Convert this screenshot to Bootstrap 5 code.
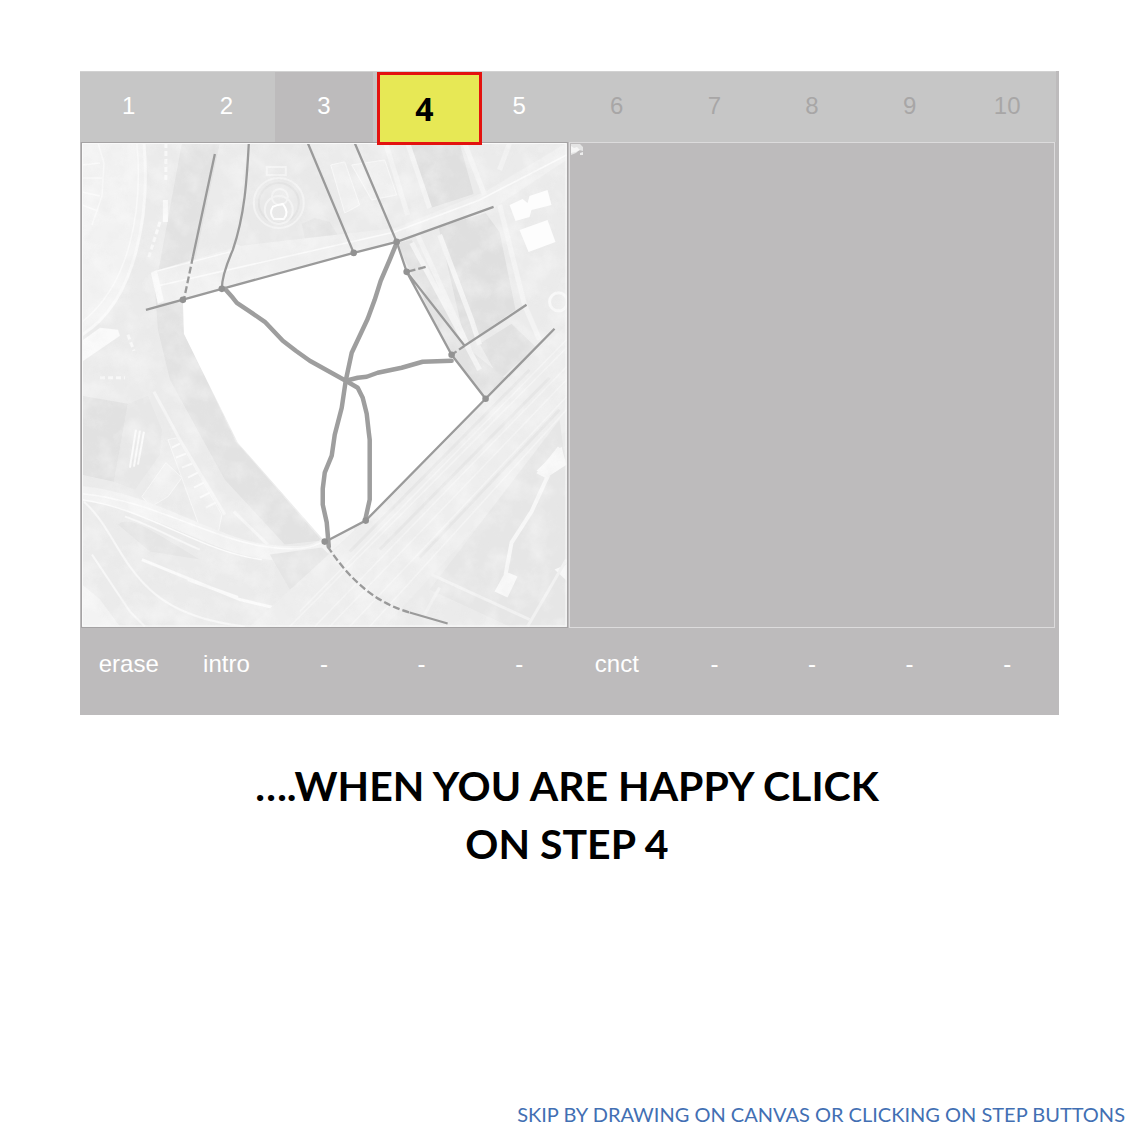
<!DOCTYPE html>
<html lang="en">
<head>
<meta charset="utf-8">
<meta name="viewport" content="width=device-width, initial-scale=1">
<title>Step 4</title>
<link href="https://cdn.jsdelivr.net/npm/bootstrap@5.3.0/dist/css/bootstrap.min.css" rel="stylesheet">
<style>
body { font-family: Lato, Carlito, sans-serif; color: #000; background: #fff; }
.stage { padding: 71px 75px 0 80px; }
.device { background: #bdbbbc; font-family: "Liberation Sans", Arial, sans-serif; padding-right: 3px; }
.ten { display: grid; grid-template-columns: repeat(10, 1fr); }
.ten button { border: 0; padding: 0; background: transparent; color: #fff; font-size: 24px; line-height: 28px; position: relative; }
.steps { border-top: 1px solid #d2d2d2; background: #c6c6c6; }
.steps button { height: 70px; padding-bottom: 2px; }
.steps .current { background: #bdbbbc; }
.steps button:disabled { color: #a8a6a6; }
.steps .pick { position: absolute; left: 4px; top: 0; width: 105px; height: 73px; z-index: 2; background: #e7e855; border: 3px solid #e3120f; color: #000; font: 700 32px/68px "Open Sans", sans-serif; padding-right: 10px; }
.panes { display: grid; grid-template-columns: 1fr 1fr; gap: 1px; padding: 0 1px; }
.pane { border: 1px solid #a5a3a4; overflow: hidden; }
.pane svg { display: block; width: 100%; height: auto; }
.blank { border-color: #dcdbdc; }
.blank svg { width: 12px; margin: 1px; }
.tools { padding: 15px 0 30px; }
.tools button { height: 42px; line-height: 30px; }
.notice { font-size: 41px; font-weight: 700; line-height: 58px; margin: 42px 0 0; text-align: center; }
.skip { color: #426fb3; font-size: 20px; line-height: 24px; padding: 0 9px 8px; text-align: right; text-decoration: none; }
</style>
</head>
<body>
<div class="d-flex flex-column min-vh-100">
<main class="stage">
<div class="device">
<nav class="ten steps" aria-label="Steps">
<button type="button">1</button><button type="button">2</button><button type="button" class="current">3</button><button type="button" aria-label="4"><span class="pick">4</span></button><button type="button">5</button><button type="button" disabled>6</button><button type="button" disabled>7</button><button type="button" disabled>8</button><button type="button" disabled>9</button><button type="button" disabled>10</button>
</nav>
<div class="panes">
<div class="pane">
<svg viewBox="82 143 485 484" role="img" aria-label="Site map with sketched paths">
<defs>
<filter id="grain" x="0" y="0" width="1" height="1"><feTurbulence type="fractalNoise" baseFrequency=".07" numOctaves="4" seed="8"/><feColorMatrix values="0 0 0 0 .8  0 0 0 0 .8  0 0 0 0 .8  2.2 0 0 0 -.95"/></filter>
<filter id="pale" x="0" y="0" width="1" height="1"><feTurbulence type="fractalNoise" baseFrequency=".04" numOctaves="4" seed="21"/><feColorMatrix values="0 0 0 0 1  0 0 0 0 1  0 0 0 0 1  0 2.4 0 0 -1"/></filter>
<filter id="soft"><feGaussianBlur stdDeviation=".7"/></filter>
</defs>
<rect x="82" y="143" width="486" height="485" fill="#ebebeb"/>
<g filter="url(#soft)">
<!-- river and water -->
<path d="M182 143H220L187 300 184 333 236 442 322 541 285 545 225 480 170 380 158 330 155 290Z" fill="#e2e2e2"/>
<path d="M408 143H460L474 194 431 208Z" fill="#dfdfdf"/>
<path d="M439 227L486 213 500 232 516 310 466 345Z" fill="#dfdfdf"/>
<path d="M480 344L512 324 536 347 500 380Z" fill="#e0e0e0"/>
<path d="M397 243L412 240 470 350 505 378 486 399 452 357Z" fill="#e1e1e1"/>
<!-- stadium -->
<path d="M82 143H144C150 210 138 300 82 335Z" fill="#f2f2f2"/>
<path d="M144 143C150 210 138 300 82 335" fill="none" stroke="#f8f8f8" stroke-width="3"/>
<path d="M137 143C143 210 130 285 82 322M82 165L100 163M82 178L102 178M82 192L100 196M82 205L98 211M98 143L104 163 102 196 92 225" fill="none" stroke="#f9f9f9" stroke-width="1.5"/>
<path d="M82 341L100 328 118 330 120 336 82 362Z" fill="#fafafa"/>
<!-- sports field -->
<path d="M82 396L128 404 114 482 82 475Z" fill="#e1e1e1"/>
<path d="M128 404L148 396 162 430 160 455 135 490 114 482Z" fill="#e7e7e7"/>
<path d="M136 430l-6 38M140 431l-6 36M144 432l-6 33" stroke="#fafafa" stroke-width="2"/>
<!-- housing rows beside the river -->
<path d="M142 497L166 463 182 478 168 497 151 507ZM168 440L178 438 222 515 218 535 200 528Z" fill="#efefef" stroke="#f7f7f7"/>
<path d="M172 448l8-4M176 458l10-4M182 468l10-4M188 478l10-5M194 488l10-5M200 498l10-5M206 508l10-5" stroke="#fafafa" stroke-width="2"/>
<path d="M154 392L180 440 225 515M234 512L268 545" fill="none" stroke="#f5f5f5" stroke-width="3"/>
<!-- curved road -->
<path d="M82 494C150 500 210 545 265 552S325 548 350 525" fill="none" stroke="#f3f3f3" stroke-width="15"/>
<path d="M82 494C150 500 210 539 265 547S325 541 350 520M82 500C150 510 200 552 262 560" fill="none" stroke="#fbfbfb" stroke-width="1.5"/>
<path d="M84 502C110 525 118 560 150 590S230 625 245 627M92 555L130 612 145 627M125 517C150 525 175 540 200 550" fill="none" stroke="#f7f7f7" stroke-width="2"/>
<path d="M142 560L240 600 290 612M188 580L238 598" fill="none" stroke="#fafafa" stroke-width="3"/>
<path d="M82 585L100 600 120 627H82Z" fill="#f3f3f3"/>
<path d="M118 525C130 515 150 530 200 560L150 552ZM270 555L322 548 335 560 290 590Z" fill="#e5e5e5"/>
<!-- railway lands -->
<path d="M567 325L567 430 385 627H250L366 521 486 400Z" fill="#eeeeee"/>
<g fill="none" stroke="#f4f4f4" stroke-width="1.5"><path d="M567 340L300 612M567 348L290 627M567 367L315 627M567 380L330 627M567 397L350 627M567 410L370 627"/></g>
<g fill="none" stroke="#e6e6e6" stroke-width="3"><path d="M530 370L350 552M550 378L380 550M560 410L420 558"/></g>
<path d="M560 420L567 470 567 627H510L430 590Z" fill="#e6e6e6"/>
<path d="M560 448L540 473 548 477 532 512 512 543 506 575" fill="none" stroke="#f7f7f7" stroke-width="4"/>
<path d="M537 471L562 447 567 465 550 476ZM506 572L518 577 508 598 495 592ZM555 570L567 565V581Z" fill="#f8f8f8"/>
<path d="M432 575L530 620M567 560L528 627M440 588L425 615" stroke="#f1f1f1" stroke-width="3"/>
<!-- park with spiral garden -->
<path d="M248 143H310L350 235 224 270 238 220Z" fill="#e9e9e9"/>
<g fill="none" stroke="#f3f3f3" stroke-width="2"><circle cx="279" cy="203" r="25"/><circle cx="279" cy="203" r="20" stroke="#e1e1e1"/><circle cx="279" cy="210" r="14"/><circle cx="280" cy="197" r="8"/><path d="M274 219Q269 213 273 207L278 205 283 204Q290 213 284 219Z" stroke="#fff"/><path d="M267 167H286V175H267ZM235 245L270 258 325 245"/></g>
<path d="M302 224L315 218 330 222 338 235 306 242Z" fill="#e2e2e2"/>
<!-- bridge road -->
<path d="M152 272L240 246 396 228 485 192 567 143V160L494 208 397 242 184 300 158 304Z" fill="#f0f0f0"/>
<path d="M154 287L395 232 480 200 567 155M154 272L230 252" fill="none" stroke="#fafafa" stroke-width="1.5"/>
<path d="M151 273l6-2 7 30-6 3ZM163 200h5v22h-5Z" fill="#fafafa"/>
<path d="M166 143v38M160 222L148 260M128 335l6 16M100 378h25" stroke="#f8f8f8" stroke-width="3" stroke-dasharray="5 3"/>
<!-- blocks and eastern roads -->
<path d="M331 165L345 162 360 205 345 213ZM352 165L385 160 397 195 372 200Z" fill="#f0f0f0" stroke="#f8f8f8"/>
<path d="M386 143L408 215M408 143L430 208M465 143L485 195M418 235L470 350M412 243L448 310 480 370M440 235L472 320 480 345M500 205L525 305 540 340M510 143L500 170" fill="none" stroke="#f3f3f3" stroke-width="5"/>
<circle cx="559" cy="302" r="9" fill="none" stroke="#f8f8f8" stroke-width="3"/>
</g>
<rect x="82" y="143" width="486" height="485" filter="url(#grain)" opacity=".25"/>
<rect x="82" y="143" width="486" height="485" filter="url(#pale)" opacity=".35"/>
<!-- warehouses -->
<path d="M510 205L523 199 528 203 530 196 548 190 552 205 532 210 530 217 516 221ZM520 230L548 220 556 242 529 252Z" fill="#fdfdfd"/>
<!-- site -->
<path d="M183 300L222 289 354 253 397 242 407 272 452 355 486 399 366 521 326 543 238 443 184 334Z" fill="#fff"/>
<g fill="none" stroke="#9a9a9a" stroke-width="2.3">
<path d="M146 310L222 289 354 253 397 242 494 207M215 154L193 257M249 143C247 180 245 215 233 250Q222 275 222 289M308 143L354 253M355 143L397 242 407 272 452 355 486 399 366 521 326 542M407 272L465 346 527 305M555 329L486 399M410 613L448 624"/>
<path d="M193 257L184 300" stroke-dasharray="7 3"/><path d="M407 272L426 267" stroke-dasharray="9 3"/><path d="M452 355L465 346" stroke-dasharray="6 3"/>
<path d="M328 547C350 580 375 603 410 613" stroke-dasharray="7 3"/>
</g>
<g fill="none" stroke="#9e9e9e" stroke-width="4.5" stroke-linejoin="round" stroke-linecap="round">
<path d="M225 289L233 298 237 303 249 311 265 322 283 341 296 351 310 361 328 371 346 381 358 388 363 398 367 414 369 432 370 440V500L366 518"/>
<path d="M397 243L390 260 381 281 375 300 368 319 352 353 346 381 342 408 335 435 332 456 325 473 323 489V505L327 523 329 547"/>
<path d="M346 381L358 378 367 377 378 373 402 368 423 362 452 361"/>
</g>
<g fill="#929292"><circle cx="183" cy="300" r="3.3"/><circle cx="222" cy="289" r="3.3"/><circle cx="354" cy="253" r="3.3"/><circle cx="397" cy="242" r="3.3"/><circle cx="407" cy="272" r="3.3"/><circle cx="452" cy="355" r="3.3"/><circle cx="486" cy="399" r="3.3"/><circle cx="366" cy="521" r="3.3"/><circle cx="325" cy="542" r="3.3"/></g>
<path d="M82.500 626.500V143.500H566.500V626.500Z" fill="none" stroke="#fafafa"/>
</svg>
</div>
<div class="pane blank">
<svg viewBox="0 0 12 12" aria-hidden="true"><path d="M0 0H9L12 3V7L8 6 5 9 0 11Z" fill="#e4e4e4"/><path d="M0 2L3 4 6 3 9 6 5 8 0 9Z" fill="#f6f6f6"/><path d="M9 9L12 8V11H9Z" fill="#ececec"/></svg>
</div>
</div>
<div class="ten tools">
<button type="button">erase</button><button type="button">intro</button><button type="button">-</button><button type="button">-</button><button type="button">-</button><button type="button">cnct</button><button type="button">-</button><button type="button">-</button><button type="button">-</button><button type="button">-</button>
</div>
</div>
</main>
<h1 class="notice">….WHEN YOU ARE HAPPY CLICK<br>ON STEP 4</h1>
<a class="skip mt-auto" href="#">SKIP BY DRAWING ON CANVAS OR CLICKING ON STEP BUTTONS</a>
</div>
<script src="https://cdn.jsdelivr.net/npm/bootstrap@5.3.0/dist/js/bootstrap.bundle.min.js"></script>
</body>
</html>
